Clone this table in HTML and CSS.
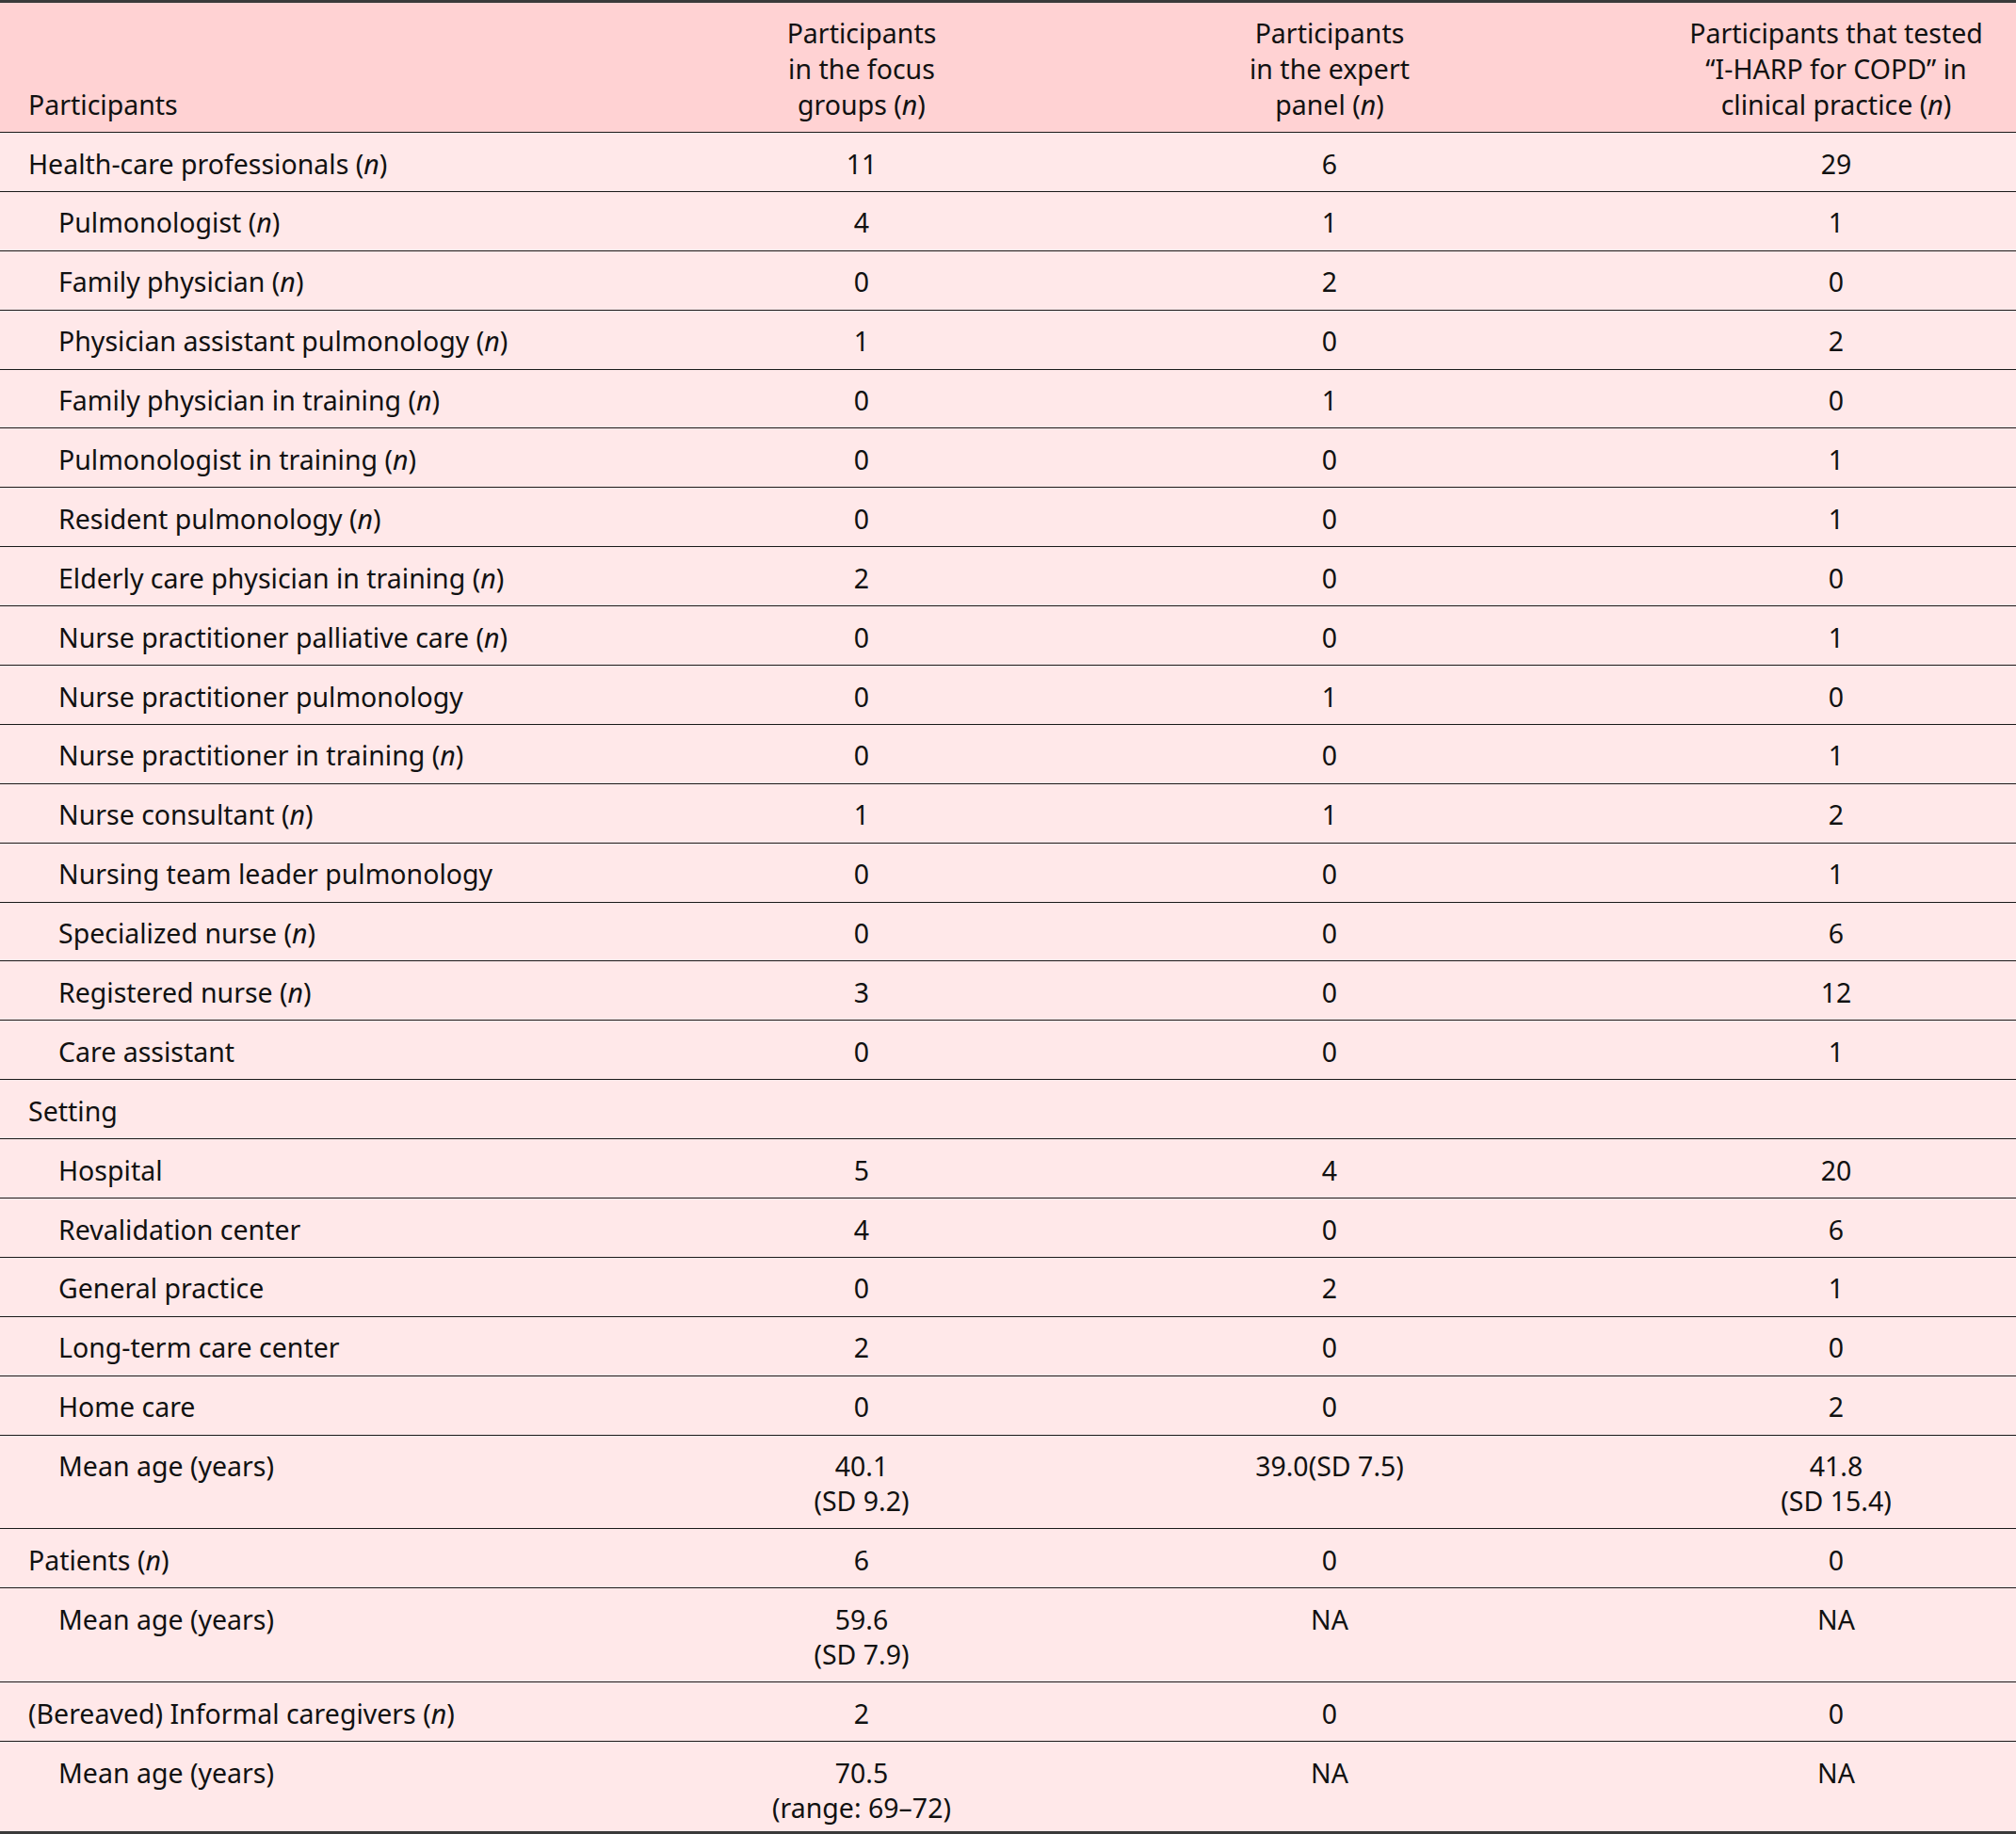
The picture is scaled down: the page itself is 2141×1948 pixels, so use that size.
FILE: index.html
```html
<!DOCTYPE html>
<html>

<head>
    <title>Participants</title>
    <link rel="stylesheet" href="styles.css">
</head>

<body>
    <div class="table-wrap">
        <table class="participants">
            <colgroup>
                <col class="col-label">
                <col class="col-focus">
                <col class="col-panel">
                <col class="col-tested">
            </colgroup>
            <thead>
                <tr>
                    <th class="label">Participants</th>
                    <th>Participants<br>in the focus<br>groups (<i>n</i>)</th>
                    <th>Participants<br>in the expert<br>panel (<i>n</i>)</th>
                    <th>Participants that tested<br>&ldquo;I-HARP for COPD&rdquo; in<br>clinical practice (<i>n</i>)</th>
                </tr>
            </thead>
            <tbody>
                <tr>
                    <td class="label">Health-care professionals (<i>n</i>)</td>
                    <td>11</td>
                    <td>6</td>
                    <td>29</td>
                </tr>
                <tr>
                    <td class="label sub">Pulmonologist (<i>n</i>)</td>
                    <td>4</td>
                    <td>1</td>
                    <td>1</td>
                </tr>
                <tr>
                    <td class="label sub">Family physician (<i>n</i>)</td>
                    <td>0</td>
                    <td>2</td>
                    <td>0</td>
                </tr>
                <tr>
                    <td class="label sub">Physician assistant pulmonology (<i>n</i>)</td>
                    <td>1</td>
                    <td>0</td>
                    <td>2</td>
                </tr>
                <tr>
                    <td class="label sub">Family physician in training (<i>n</i>)</td>
                    <td>0</td>
                    <td>1</td>
                    <td>0</td>
                </tr>
                <tr>
                    <td class="label sub">Pulmonologist in training (<i>n</i>)</td>
                    <td>0</td>
                    <td>0</td>
                    <td>1</td>
                </tr>
                <tr>
                    <td class="label sub">Resident pulmonology (<i>n</i>)</td>
                    <td>0</td>
                    <td>0</td>
                    <td>1</td>
                </tr>
                <tr>
                    <td class="label sub">Elderly care physician in training (<i>n</i>)</td>
                    <td>2</td>
                    <td>0</td>
                    <td>0</td>
                </tr>
                <tr>
                    <td class="label sub">Nurse practitioner palliative care (<i>n</i>)</td>
                    <td>0</td>
                    <td>0</td>
                    <td>1</td>
                </tr>
                <tr>
                    <td class="label sub">Nurse practitioner pulmonology</td>
                    <td>0</td>
                    <td>1</td>
                    <td>0</td>
                </tr>
                <tr>
                    <td class="label sub">Nurse practitioner in training (<i>n</i>)</td>
                    <td>0</td>
                    <td>0</td>
                    <td>1</td>
                </tr>
                <tr>
                    <td class="label sub">Nurse consultant (<i>n</i>)</td>
                    <td>1</td>
                    <td>1</td>
                    <td>2</td>
                </tr>
                <tr>
                    <td class="label sub">Nursing team leader pulmonology</td>
                    <td>0</td>
                    <td>0</td>
                    <td>1</td>
                </tr>
                <tr>
                    <td class="label sub">Specialized nurse (<i>n</i>)</td>
                    <td>0</td>
                    <td>0</td>
                    <td>6</td>
                </tr>
                <tr>
                    <td class="label sub">Registered nurse (<i>n</i>)</td>
                    <td>3</td>
                    <td>0</td>
                    <td>12</td>
                </tr>
                <tr>
                    <td class="label sub">Care assistant</td>
                    <td>0</td>
                    <td>0</td>
                    <td>1</td>
                </tr>
                <tr>
                    <td class="label">Setting</td>
                    <td></td>
                    <td></td>
                    <td></td>
                </tr>
                <tr>
                    <td class="label sub">Hospital</td>
                    <td>5</td>
                    <td>4</td>
                    <td>20</td>
                </tr>
                <tr>
                    <td class="label sub">Revalidation center</td>
                    <td>4</td>
                    <td>0</td>
                    <td>6</td>
                </tr>
                <tr>
                    <td class="label sub">General practice</td>
                    <td>0</td>
                    <td>2</td>
                    <td>1</td>
                </tr>
                <tr>
                    <td class="label sub">Long-term care center</td>
                    <td>2</td>
                    <td>0</td>
                    <td>0</td>
                </tr>
                <tr>
                    <td class="label sub">Home care</td>
                    <td>0</td>
                    <td>0</td>
                    <td>2</td>
                </tr>
                <tr>
                    <td class="label sub">Mean age (years)</td>
                    <td>40.1<br>(SD 9.2)</td>
                    <td>39.0(SD 7.5)</td>
                    <td>41.8<br>(SD 15.4)</td>
                </tr>
                <tr>
                    <td class="label">Patients (<i>n</i>)</td>
                    <td>6</td>
                    <td>0</td>
                    <td>0</td>
                </tr>
                <tr>
                    <td class="label sub">Mean age (years)</td>
                    <td>59.6<br>(SD 7.9)</td>
                    <td>NA</td>
                    <td>NA</td>
                </tr>
                <tr>
                    <td class="label">(Bereaved) Informal caregivers (<i>n</i>)</td>
                    <td>2</td>
                    <td>0</td>
                    <td>0</td>
                </tr>
                <tr>
                    <td class="label sub">Mean age (years)</td>
                    <td>70.5<br>(range: 69&ndash;72)</td>
                    <td>NA</td>
                    <td>NA</td>
                </tr>
            </tbody>
        </table>
    </div>
</body>

</html>
```

FILE: styles.css
```css
body {
    margin: 0;
    background-color: #ffe8e9;
    font-family: "Noto Sans", "Open Sans", sans-serif;
    color: #111;
}

.table-wrap {
    width: 2141px;
    border-top: 3px solid #3a3a3a;
    border-bottom: 3px solid #3a3a3a;
}

.participants {
    width: 100%;
    border-collapse: collapse;
    table-layout: fixed;
    font-size: 28.5px;
    line-height: 37px;
    background-color: #ffe8e9;
}

.col-label {
    width: 765px;
}

.col-focus {
    width: 300px;
}

.col-panel {
    width: 694px;
}

.col-tested {
    width: 382px;
}

.participants thead th {
    background-color: #ffd2d3;
    font-weight: normal;
    line-height: 38px;
    text-align: center;
    vertical-align: bottom;
    padding: 13px 0 10px 0;
    border-bottom: 1px solid #1a1a1a;
}

.participants td {
    text-align: center;
    vertical-align: top;
    padding: 14.5px 0 10.4px 0;
    border-bottom: 1px solid #1a1a1a;
}

.participants tbody tr:last-child td {
    border-bottom: none;
    padding-bottom: 6.5px;
}

.participants .label {
    text-align: left;
    padding-left: 30px;
}

.participants .sub {
    padding-left: 62px;
}

.participants i {
    font-style: italic;
}
```
